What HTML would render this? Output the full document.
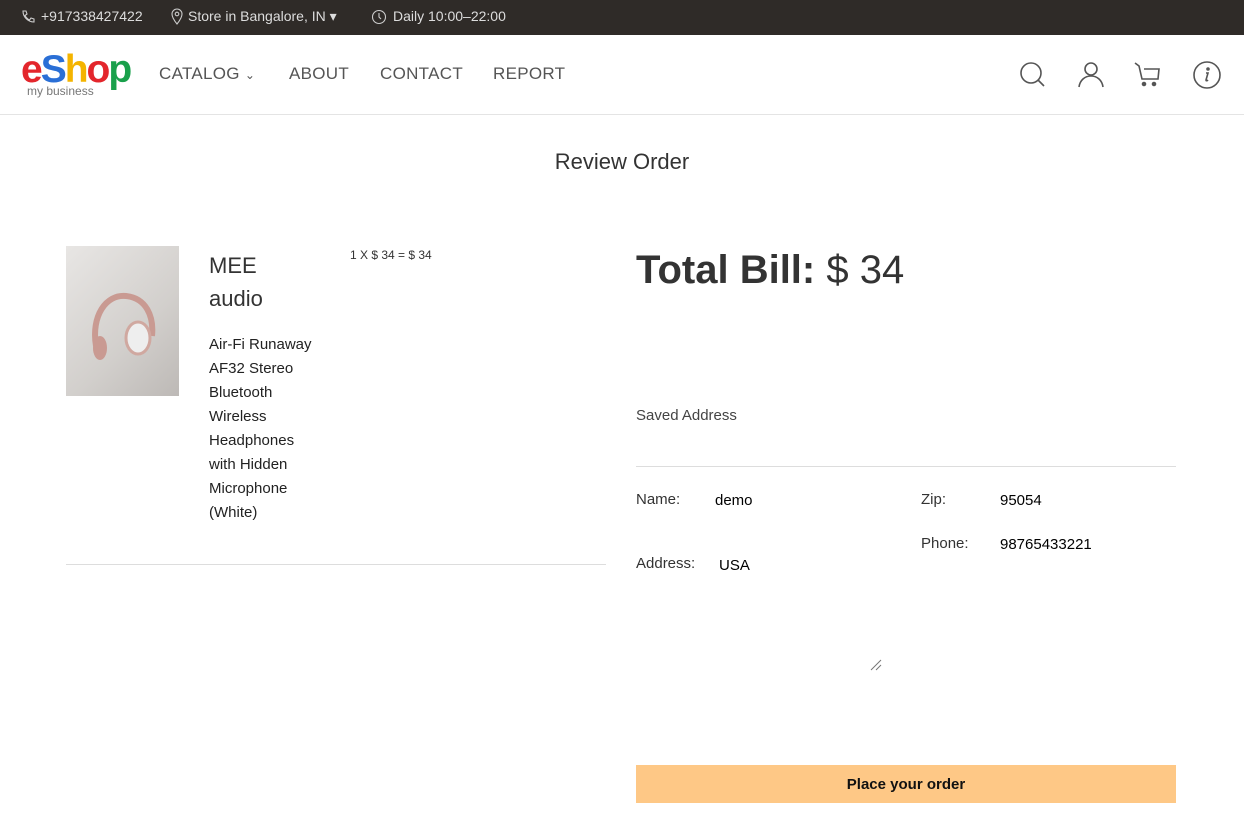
<!DOCTYPE html>
<html><head><style>
*{margin:0;padding:0;box-sizing:border-box}
body{width:1244px;height:816px;background:#fff;font-family:"Liberation Sans",sans-serif;color:#333;position:relative;overflow:hidden}
.a{position:absolute}
.top{left:0;top:0;width:1244px;height:35px;background:#2f2b28;color:#ddd;font-size:14px}
.top span{position:absolute;top:8px}
.nav{top:36px;left:0;width:1244px;height:79px;border-bottom:1px solid #e4e4e4}
.nav .m{position:absolute;top:28px;font-size:17px;color:#555;letter-spacing:.3px}
svg{position:absolute}
</style></head><body>
<div class="a top">
<svg style="left:20px;top:9px" width="16" height="16" viewBox="0 0 16 16" fill="none" stroke="#ccc" stroke-width="1.1"><path d="M3 2l3 0 1 3-2 1.5c1 2 2.5 3.5 4.5 4.5L11 9l3 1v3c-6 0-11-5-11-11z"/></svg>
<span style="left:41px">+917338427422</span>
<svg style="left:170px;top:8px" width="14" height="17" viewBox="0 0 14 17" fill="none" stroke="#ccc" stroke-width="1.1"><path d="M7 16C3 11 2 8 2 6a5 5 0 0110 0c0 2-1 5-5 10z"/><circle cx="7" cy="6" r="1.8"/></svg>
<span style="left:188px">Store in Bangalore, IN ▾</span>
<svg style="left:371px;top:9px" width="16" height="16" viewBox="0 0 16 16" fill="none" stroke="#ccc" stroke-width="1.1"><circle cx="8" cy="8" r="6.5"/><path d="M8 4v4l2 2"/></svg>
<span style="left:393px">Daily 10:00–22:00</span>
</div>
<div class="a nav">
<div class="a" style="left:21px;top:12px;font-size:39px;font-weight:bold;letter-spacing:-2px;line-height:44px"><span style="color:#e3262c">e</span><span style="color:#2a6fd6">S</span><span style="color:#f4b400">h</span><span style="color:#e3262c">o</span><span style="color:#19a04b">p</span></div>
<div class="a" style="left:27px;top:48px;font-size:12px;color:#777;background:#fff;padding-right:2px">my business</div>
<span class="m" style="left:159px">CATALOG <span style="font-size:12px">⌄</span></span>
<span class="m" style="left:289px">ABOUT</span>
<span class="m" style="left:380px">CONTACT</span>
<span class="m" style="left:493px">REPORT</span>
<svg style="left:1019px;top:25px" width="30" height="28" viewBox="0 0 30 28" fill="none" stroke="#555" stroke-width="1.6"><circle cx="12" cy="12" r="10"/><path d="M19 19l6 6"/></svg>
<svg style="left:1077px;top:24px" width="28" height="28" viewBox="0 0 28 28" fill="none" stroke="#555" stroke-width="1.6"><circle cx="14" cy="9" r="6"/><path d="M2 27c1-7 6-11 12-11s11 4 12 11"/></svg>
<svg style="left:1134px;top:26px" width="28" height="26" viewBox="0 0 28 26" fill="none" stroke="#555" stroke-width="1.6"><path d="M1 1l4 3 3 13h16l1-10H10"/><circle cx="10" cy="22" r="1.5" fill="#555"/><circle cx="20" cy="22" r="1.5" fill="#555"/></svg>
<svg style="left:1192px;top:24px" width="30" height="30" viewBox="0 0 30 30" fill="none" stroke="#555" stroke-width="1.6"><circle cx="15" cy="15" r="13"/><circle cx="16" cy="9" r="1" fill="#555"/><path d="M14 13h2l-2 7c0 1 1 1 2 0"/></svg>
</div>
<div class="a" style="left:0;width:1244px;top:149px;text-align:center;font-size:22px;color:#333">Review Order</div>
<div class="a" style="left:66px;top:246px;width:113px;height:150px;background:linear-gradient(135deg,#e8e6e4,#d2cfcc 60%,#bdb9b6)"></div>
<svg style="left:86px;top:286px" width="72" height="80" viewBox="0 0 72 80" fill="none"><path d="M10 60C5 30 20 8 40 10c20 2 28 20 26 40" stroke="#c99a92" stroke-width="6"/><ellipse cx="52" cy="52" rx="12" ry="16" fill="#eee" stroke="#d0a8a0" stroke-width="3"/><ellipse cx="14" cy="62" rx="7" ry="12" fill="#c99a92"/></svg>
<div class="a" style="left:209px;top:249px;font-size:22px;line-height:33px;color:#333">MEE<br>audio</div>
<div class="a" style="left:209px;top:333px;width:108px;font-size:15px;line-height:24px;color:#222">Air-Fi Runaway AF32 Stereo Bluetooth Wireless Headphones with Hidden Microphone (White)</div>
<div class="a" style="left:350px;top:248px;font-size:12px;color:#333">1 X $ 34 = $ 34</div>
<div class="a" style="left:66px;top:564px;width:540px;border-top:1px solid #ddd"></div>
<div class="a" style="left:636px;top:248px;font-size:40px;color:#333"><b>Total Bill:</b> $ 34</div>
<div class="a" style="left:636px;top:407px;font-size:15px;color:#444">Saved Address</div>
<div class="a" style="left:636px;top:466px;width:540px;border-top:1px solid #ddd"></div>
<div class="a" style="left:636px;top:491px;font-size:15px">Name:</div>
<div class="a" style="left:715px;top:492px;font-size:15px;color:#000">demo</div>
<div class="a" style="left:921px;top:491px;font-size:15px">Zip:</div>
<div class="a" style="left:1000px;top:492px;font-size:15px;color:#000">95054</div>
<div class="a" style="left:921px;top:535px;font-size:15px">Phone:</div>
<div class="a" style="left:1000px;top:536px;font-size:15px;color:#000">98765433221</div>
<div class="a" style="left:636px;top:555px;font-size:15px">Address:</div>
<div class="a" style="left:719px;top:557px;font-size:15px;color:#000">USA</div>
<svg style="left:870px;top:659px" width="12" height="12" viewBox="0 0 12 12" stroke="#777"><path d="M1 11L11 1M6 11l5-5"/></svg>
<div class="a" style="left:636px;top:765px;width:540px;height:38px;background:#fec886;text-align:center;line-height:40px;font-size:15px;font-weight:bold;color:#111">Place your order</div>
</body></html>
